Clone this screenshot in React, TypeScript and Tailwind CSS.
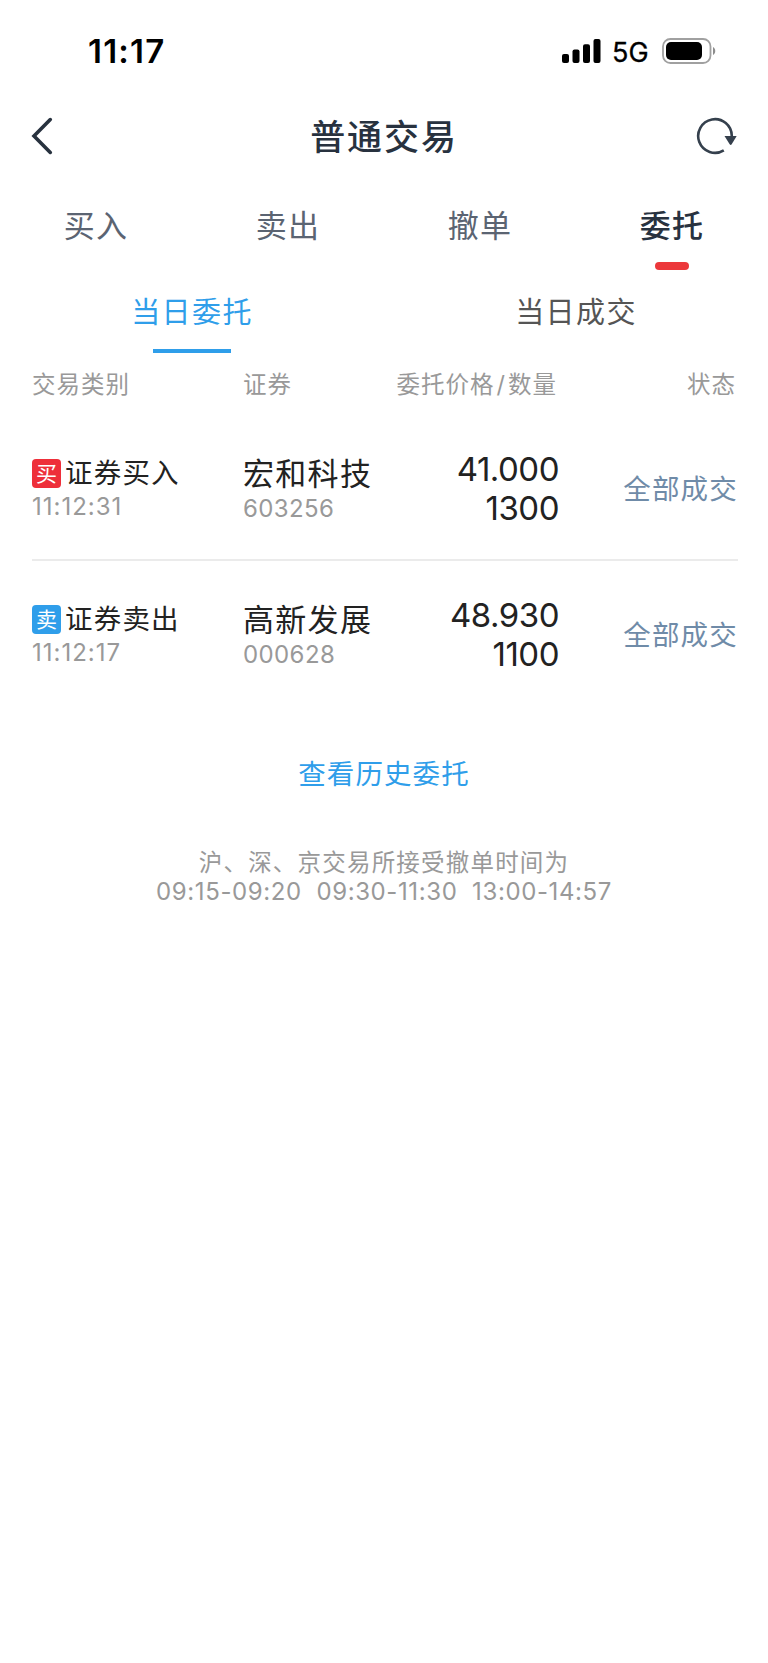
import { useState } from 'react';
import clsx from 'clsx';

type Side = 'buy' | 'sell';

interface Order {
  id: string;
  side: Side;
  label: string;
  time: string;
  name: string;
  code: string;
  price: string;
  quantity: string;
  status: string;
}

const TABS = ['买入', '卖出', '撤单', '委托'];
const SUB_TABS = ['当日委托', '当日成交'];

const ORDERS: Order[] = [
  {
    id: '1',
    side: 'buy',
    label: '证券买入',
    time: '11:12:31',
    name: '宏和科技',
    code: '603256',
    price: '41.000',
    quantity: '1300',
    status: '全部成交',
  },
  {
    id: '2',
    side: 'sell',
    label: '证券卖出',
    time: '11:12:17',
    name: '高新发展',
    code: '000628',
    price: '48.930',
    quantity: '1100',
    status: '全部成交',
  },
];

function StatusBar() {
  return (
    <div className="flex h-[102px] items-center justify-between pl-[88px] pr-[52px] text-black">
      <span className="text-[33px] font-semibold leading-none tracking-[1.2px]">11:17</span>
      <div className="flex items-center">
        <svg width="39" height="24" viewBox="0 0 39 24" fill="currentColor">
          <rect x="0" y="15" width="7" height="9" rx="2" />
          <rect x="10.5" y="10.5" width="7" height="13.5" rx="2" />
          <rect x="21" y="5.2" width="7" height="18.8" rx="2" />
          <rect x="31.5" y="0" width="7" height="24" rx="2" />
        </svg>
        <span className="ml-[11px] mt-[2px] w-[38px] text-[27px] leading-none [-webkit-text-stroke:0.3px_black]">5G</span>
        <svg className="ml-[12px]" width="54" height="26" viewBox="0 0 54 26" fill="none">
          <rect x="1" y="1" width="47.5" height="24" rx="7.5" stroke="#a0a0a0" strokeWidth="1.8" />
          <rect x="4" y="4" width="36" height="18" rx="5" fill="#000" />
          <path d="M51 9c3 1.4 3 6.6 0 8z" fill="#8c8c8c" />
        </svg>
      </div>
    </div>
  );
}

function NavBar() {
  return (
    <div className="flex h-[68px] items-center justify-between px-[30px] text-[#28323f]">
      <button className="w-[42px]">
        <svg width="23" height="38" viewBox="0 0 23 38" fill="none" stroke="currentColor" strokeWidth="3.6">
          <path d="M20.3 2.6 4 19l16.300 16.400" strokeLinecap="round" />
        </svg>
      </button>
      <h1 className="pt-[2px] text-[35px] font-medium leading-none tracking-[1.9px]">普通交易</h1>
      <button className="w-[42px]">
        <svg width="42" height="38" viewBox="0 0 42 38" fill="none" className="text-[#35404d]">
          <path d="M35.8 19A16.8 16.8 0 1 0 27.8 33.300" stroke="currentColor" strokeWidth="2.6" />
          <path d="M28.5 19h12.200l-5 8.200q-1 1.400-2 0z" fill="currentColor" />
        </svg>
      </button>
    </div>
  );
}

function SideBadge({ side }: { side: Side }) {
  return (
    <span
      className={clsx(
        'flex h-[29px] w-[29px] items-center justify-center rounded-[4px] text-[21px] leading-none text-white',
        side === 'buy' ? 'bg-[#ee2f3a]' : 'bg-[#2f9eea]'
      )}
    >
      {side === 'buy' ? '买' : '卖'}
    </span>
  );
}

function OrderRow({ order }: { order: Order }) {
  return (
    <div className="grid h-[145px] grid-cols-[211px_148px_168px_1fr] items-center text-[#222]">
      <div className="pt-[5px]">
        <div className="flex h-[36px] items-center gap-[4px]">
          <SideBadge side={order.side} />
          <span className="text-[27.5px] leading-[34px] tracking-[1.2px]">{order.label}</span>
        </div>
        <div className="h-[34px] text-[24px] leading-[31px] tracking-[1px] text-[#999]">{order.time}</div>
      </div>
      <div className="pt-[7px]">
        <div className="h-[36px] text-[31px] leading-[35px] tracking-[1.3px]">{order.name}</div>
        <div className="h-[34px] text-[24px] leading-[34px] tracking-[0.4px] text-[#999]">{order.code}</div>
      </div>
      <div className="pt-[2px] text-right text-[33px] leading-[39px] tracking-[-0.5px]">
        <div>{order.price}</div>
        <div>{order.quantity}</div>
      </div>
      <div className="pt-[2px] text-right text-[27.5px] leading-[36px] tracking-[1.2px] text-[#6f8ba8]">
        {order.status}
      </div>
    </div>
  );
}

export default function App() {
  const [tab, setTab] = useState(3);
  const [subTab, setSubTab] = useState(0);

  return (
    <div className="min-h-[1663px] w-[768px] bg-white font-['Inter','Noto_Sans_CJK_SC',sans-serif]">
      <StatusBar />
      <NavBar />

      <div className="grid h-[101px] grid-cols-4">
        {TABS.map((name, i) => (
          <button key={name} onClick={() => setTab(i)} className="flex flex-col items-center pt-[36px]">
            <span
              className={clsx(
                'text-[31px] leading-[40px] tracking-[1.2px]',
                i === tab ? 'font-medium text-[#28323f]' : 'text-[#5b6472]'
              )}
            >
              {name}
            </span>
            {i === tab && <span className="mt-[16px] h-[8px] w-[34px] rounded-full bg-[#ec383b]" />}
          </button>
        ))}
      </div>

      <div className="grid h-[82px] grid-cols-2">
        {SUB_TABS.map((name, i) => (
          <button key={name} onClick={() => setSubTab(i)} className="flex flex-col items-center pt-[22px]">
            <span
              className={clsx('text-[29px] leading-[40px] tracking-[1.4px]', i === subTab ? 'text-[#2f9eea]' : 'text-[#555]')}
            >
              {name}
            </span>
            {i === subTab && <span className="mt-[16px] h-[4px] w-[78px] bg-[#2f9eea]" />}
          </button>
        ))}
      </div>

      <div className="pl-[32px] pr-[30px]">
        <div className="grid h-[63px] grid-cols-[211px_148px_166px_1fr] text-[23.5px] leading-[64px] tracking-[1px] text-[#999]">
          <div>交易类别</div>
          <div>证券</div>
          <div className="whitespace-nowrap text-right">
            委托价格<span className="px-[2px]">/</span>数量
          </div>
          <div className="pr-[2px] text-right">状态</div>
        </div>
        <div className="divide-y-2 divide-[#ebebeb]">
          {ORDERS.map((order) => (
            <OrderRow key={order.id} order={order} />
          ))}
        </div>
      </div>

      <div className="pt-[48px] text-center">
        <button className="text-[27.5px] leading-[40px] tracking-[1.1px] text-[#2f9eea]">查看历史委托</button>
      </div>
      <div className="pt-[54px] text-center leading-[29px] text-[#999]">
        <p className="text-[23.5px] tracking-[1.2px]">沪、深、京交易所接受撤单时间为</p>
        <p className="whitespace-pre text-[24px] tracking-[0.6px]">09:15-09:20  09:30-11:30  13:00-14:57</p>
      </div>
    </div>
  );
}
